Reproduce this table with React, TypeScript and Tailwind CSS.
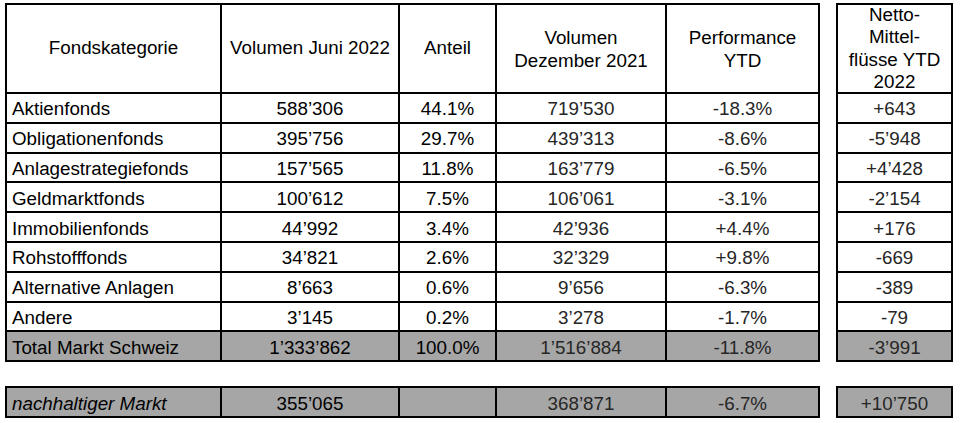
const font = { fontFamily: '"Liberation Sans", Arial, sans-serif' };

type Row = { label: string; cells: string[]; net: string; gray?: boolean; italic?: boolean };

const rows: Row[] = [
  { label: "Aktienfonds", cells: ["588’306", "44.1%", "719’530", "-18.3%"], net: "+643" },
  { label: "Obligationenfonds", cells: ["395’756", "29.7%", "439’313", "-8.6%"], net: "-5’948" },
  { label: "Anlagestrategiefonds", cells: ["157’565", "11.8%", "163’779", "-6.5%"], net: "+4’428" },
  { label: "Geldmarktfonds", cells: ["100’612", "7.5%", "106’061", "-3.1%"], net: "-2’154" },
  { label: "Immobilienfonds", cells: ["44’992", "3.4%", "42’936", "+4.4%"], net: "+176" },
  { label: "Rohstofffonds", cells: ["34’821", "2.6%", "32’329", "+9.8%"], net: "-669" },
  { label: "Alternative Anlagen", cells: ["8’663", "0.6%", "9’656", "-6.3%"], net: "-389" },
  { label: "Andere", cells: ["3’145", "0.2%", "3’278", "-1.7%"], net: "-79" },
  { label: "Total Markt Schweiz", cells: ["1’333’862", "100.0%", "1’516’884", "-11.8%"], net: "-3’991", gray: true },
];

const sustainable: Row = {
  label: "nachhaltiger Markt",
  cells: ["355’065", "", "368’871", "-6.7%"],
  net: "+10’750",
  gray: true,
  italic: true,
};

const leftCols = "grid-cols-[215px_178px_97px_170px_153px]";
const cell = "border-r-2 border-b-2 border-black flex items-center";

function Header() {
  return (
    <>
      <div className={`${cell} justify-center`}>Fondskategorie</div>
      <div className={`${cell} justify-center`}>Volumen Juni 2022</div>
      <div className={`${cell} justify-center`}>Anteil</div>
      <div className={`${cell} justify-center text-center leading-[23px]`}>
        Volumen
        <br />
        Dezember 2021
      </div>
      <div className={`${cell} justify-center text-center leading-[23px]`}>
        Performance
        <br />
        YTD
      </div>
    </>
  );
}

function LeftRow({ row }: { row: Row }) {
  const bg = row.gray ? "bg-[#a6a6a6]" : "bg-white";
  return (
    <>
      <div className={`${cell} ${bg} pl-[5px] pt-[3px] ${row.italic ? "italic" : ""}`}>{row.label}</div>
      {row.cells.map((v, i) => (
        <div key={i} className={`${cell} ${bg} justify-center pt-[3px] ${i < 2 ? "text-black" : "text-[#262626]"}`}>
          {v}
        </div>
      ))}
    </>
  );
}

export default function App() {
  return (
    <div className="w-[960px] h-[423px] bg-white text-black text-[18.8px] pt-[3px] pl-[5px] overflow-hidden" style={font}>
      <div className="flex gap-[16px]">
        <div className={`grid ${leftCols} grid-rows-[89px_repeat(9,29.8px)] border-l-2 border-t-2 border-black`}>
          <Header />
          {rows.map((r) => (
            <LeftRow key={r.label} row={r} />
          ))}
        </div>
        <div className="grid grid-cols-[115px] grid-rows-[89px_repeat(9,29.8px)] border-l-2 border-t-2 border-black">
          <div className={`${cell} justify-center text-center leading-[22.5px]`}>
            Netto-
            <br />
            Mittel-
            <br />
            flüsse YTD
            <br />
            2022
          </div>
          {rows.map((r) => (
            <div
              key={r.label}
              className={`${cell} justify-center pt-[3px] text-[#262626] ${r.gray ? "bg-[#a6a6a6]" : "bg-white"}`}
            >
              {r.net}
            </div>
          ))}
        </div>
      </div>

      {/* sustainable market */}
      <div className="flex gap-[16px] mt-[24px]">
        <div className={`grid ${leftCols} grid-rows-[30px] border-l-2 border-t-2 border-black`}>
          <LeftRow row={sustainable} />
        </div>
        <div className="grid grid-cols-[115px] grid-rows-[30px] border-l-2 border-t-2 border-black">
          <div className={`${cell} justify-center pt-[3px] bg-[#a6a6a6] text-[#262626]`}>{sustainable.net}</div>
        </div>
      </div>
    </div>
  );
}
